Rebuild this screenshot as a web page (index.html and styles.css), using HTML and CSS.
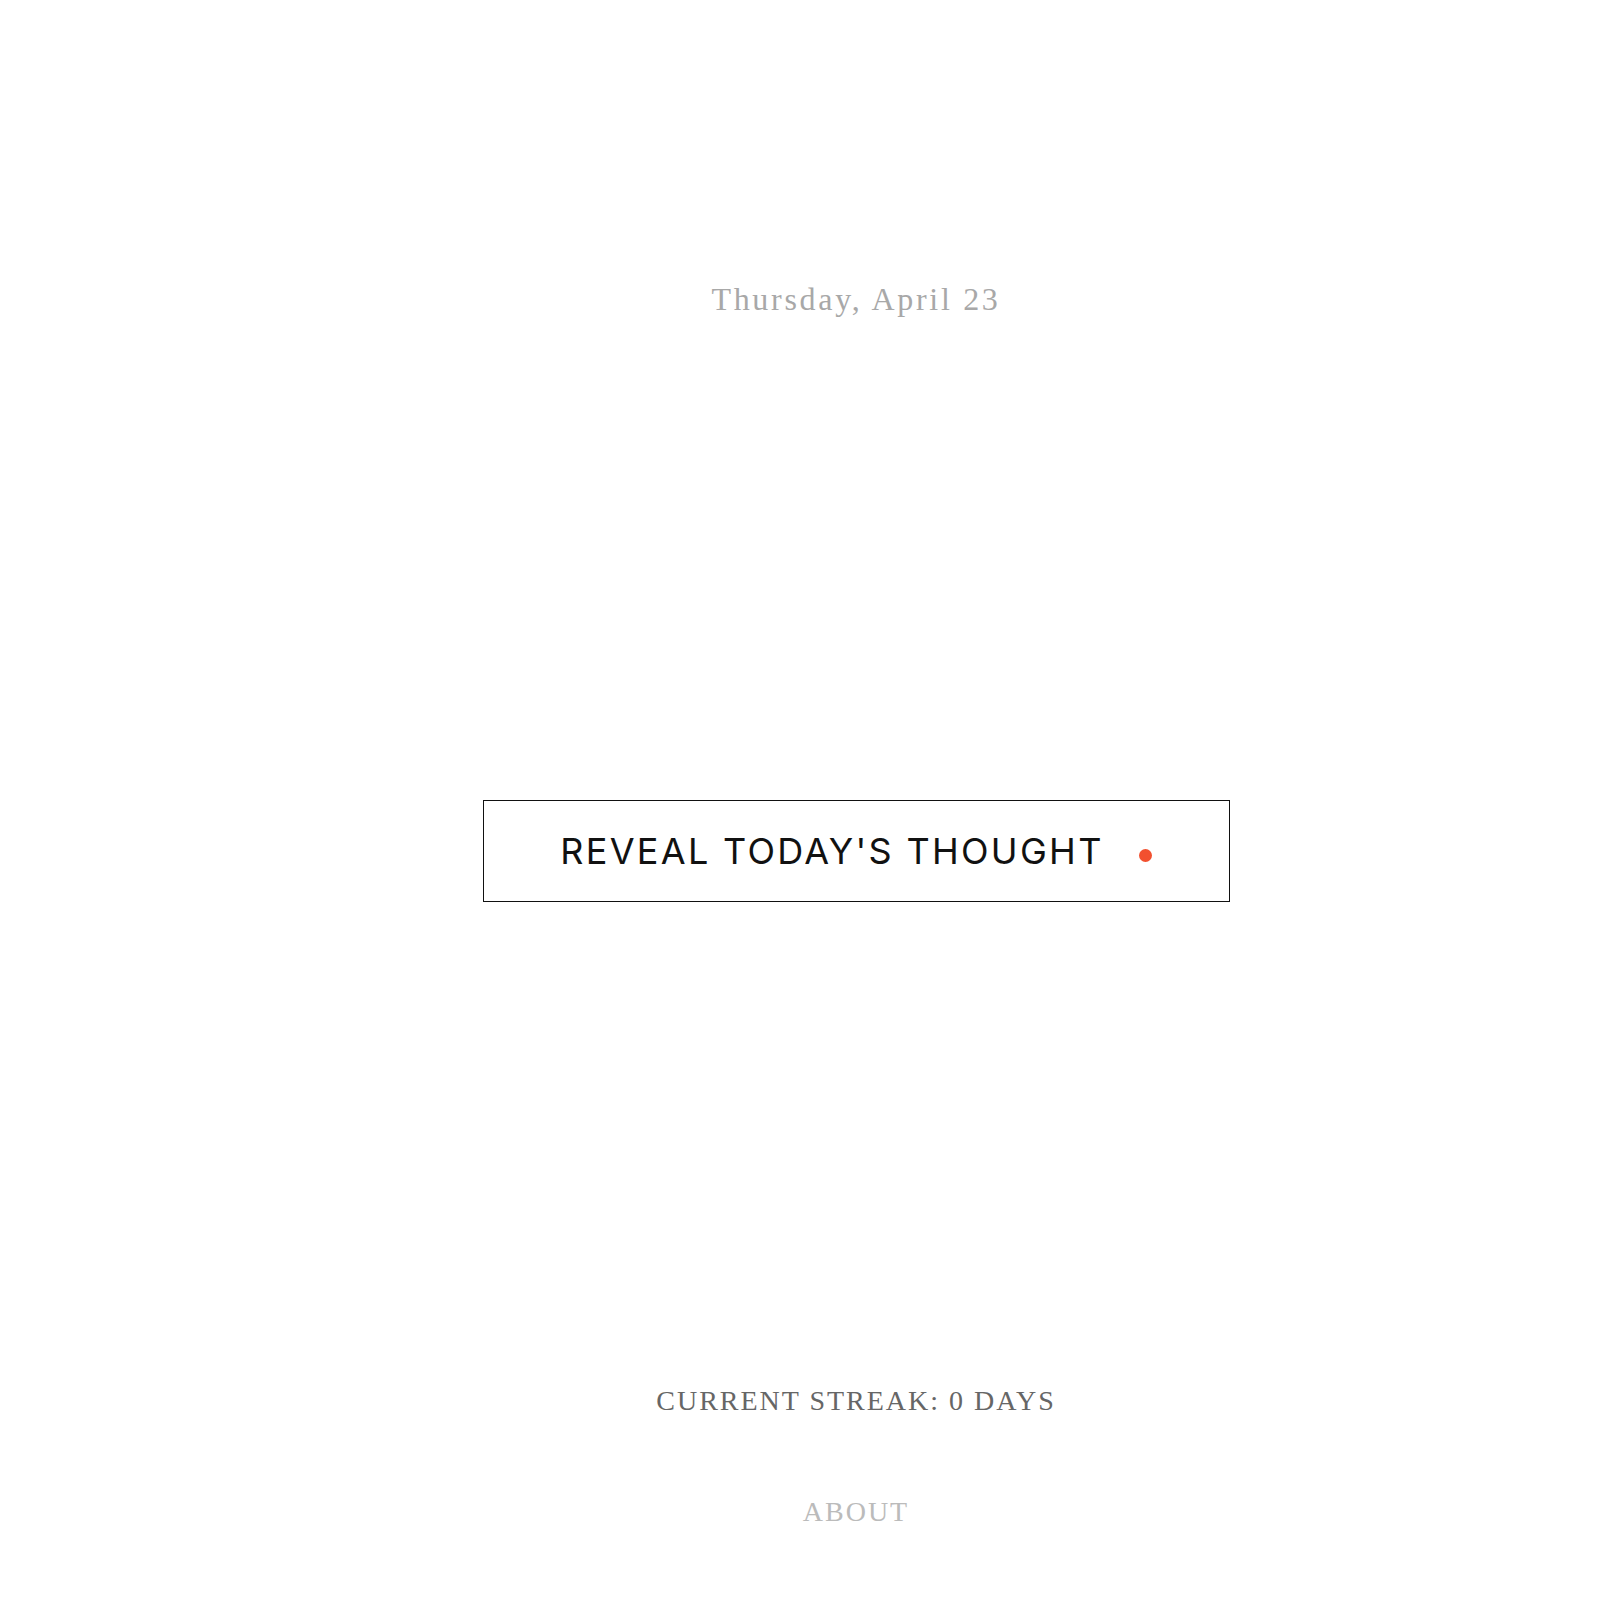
FILE: index.html
```html
<!DOCTYPE html>
<html lang="en">
<head>
<meta charset="utf-8">
<title>Daily Thought</title>
<link rel="stylesheet" href="styles.css">
</head>
<body>
<main class="page">
  <div class="date">Thursday, April 23</div>
  <button class="reveal" type="button">
    <span class="reveal-label">REVEAL TODAY'S THOUGHT</span>
    <span class="reveal-dot"></span>
  </button>
  <div class="streak">CURRENT STREAK: 0 DAYS</div>
  <a class="about" href="#">ABOUT</a>
</main>
</body>
</html>
```

FILE: styles.css
```css
html, body {
  margin: 0;
  padding: 0;
  background: #ffffff;
}

.page {
  box-sizing: border-box;
  min-height: 1598px;
  padding-left: 112px;
  padding-top: 279px;
  display: flex;
  flex-direction: column;
  align-items: center;
}

.date {
  font-family: "Liberation Serif", "DejaVu Serif", serif;
  font-size: 32px;
  line-height: 40px;
  letter-spacing: 2.7px;
  color: #a8a8a8;
}

.reveal {
  margin-top: 481px;
  box-sizing: border-box;
  width: 747px;
  height: 102px;
  border: 1.5px solid #111111;
  background: #ffffff;
  display: flex;
  align-items: center;
  justify-content: center;
  gap: 35px;
  padding: 0;
  cursor: pointer;
}

.reveal-label {
  font-family: Inter, "Liberation Sans", sans-serif;
  font-size: 36px;
  font-weight: 400;
  letter-spacing: 2.3px;
  color: #111111;
  line-height: 40px;
}

.reveal-dot {
  width: 13px;
  height: 13px;
  border-radius: 50%;
  background: #f2502f;
  margin-top: 8px;
}

.streak {
  margin-top: 481px;
  font-family: "Liberation Serif", "DejaVu Serif", serif;
  font-size: 28px;
  line-height: 36px;
  letter-spacing: 2px;
  color: #666666;
}

.about {
  margin-top: 75px;
  font-family: "Liberation Serif", "DejaVu Serif", serif;
  font-size: 28px;
  line-height: 36px;
  letter-spacing: 2px;
  color: #bbbbbb;
  text-decoration: none;
}
```
